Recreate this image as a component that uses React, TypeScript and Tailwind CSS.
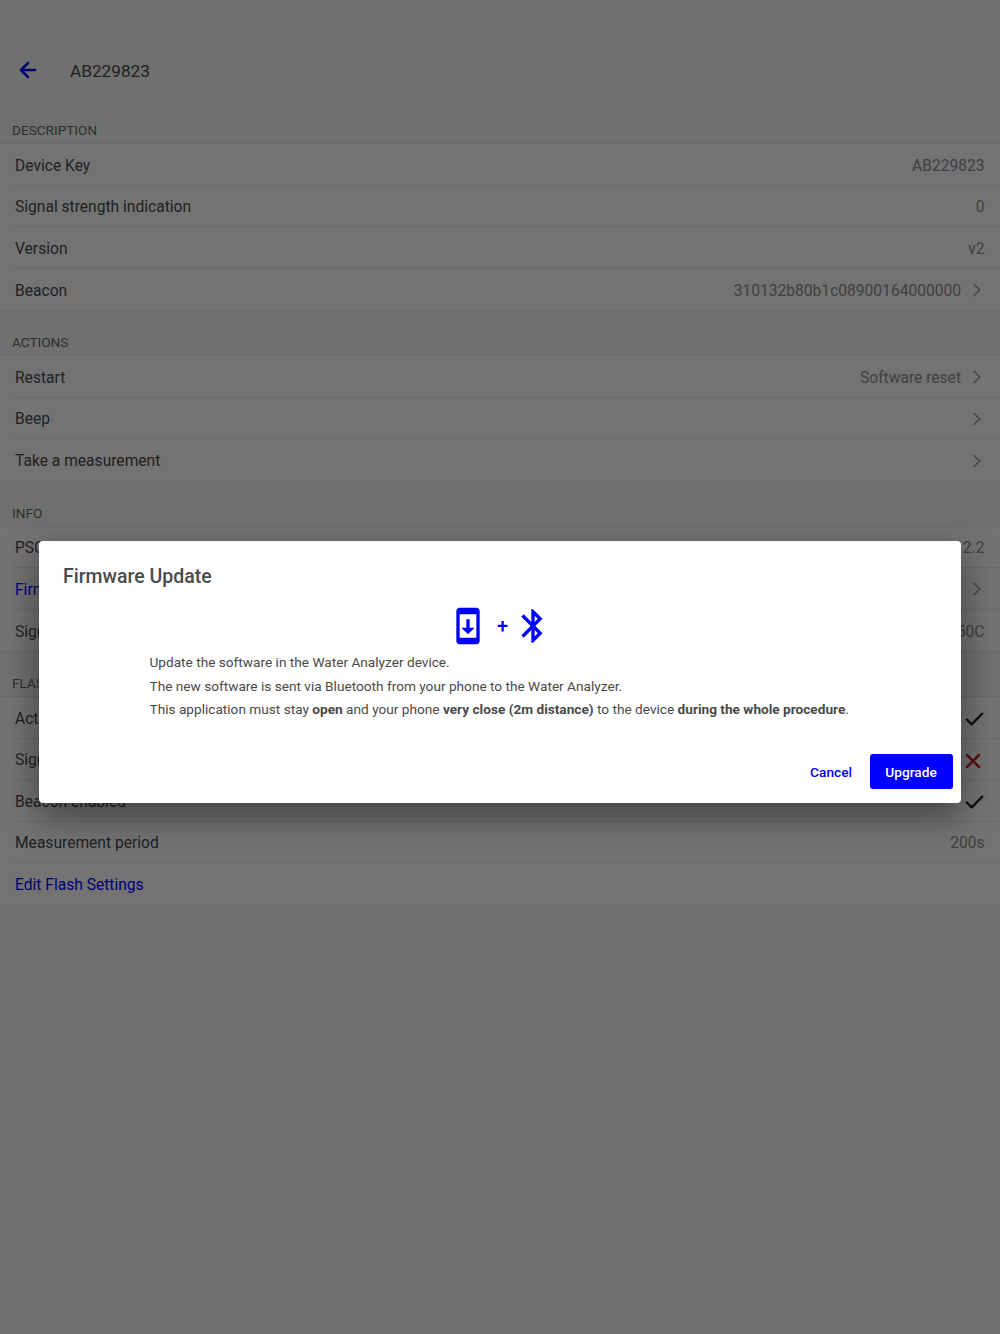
import { ArrowLeft, Check, ChevronRight, X } from 'lucide-react'
import { MdBluetooth, MdSystemUpdate } from 'react-icons/md'
import type { ReactNode } from 'react'

type Row = { label: string; value?: string; link?: boolean; chevron?: boolean; right?: ReactNode }

const sections: Array<{ title: string; rows: Row[] }> = [
  {
    title: 'DESCRIPTION',
    rows: [
      { label: 'Device Key', value: 'AB229823' },
      { label: 'Signal strength indication', value: '0' },
      { label: 'Version', value: 'v2' },
      { label: 'Beacon', value: '310132b80b1c08900164000000', chevron: true },
    ],
  },
  {
    title: 'ACTIONS',
    rows: [
      { label: 'Restart', value: 'Software reset', chevron: true },
      { label: 'Beep', chevron: true },
      { label: 'Take a measurement', chevron: true },
    ],
  },
  {
    title: 'INFO',
    rows: [
      { label: 'PSOC Version', value: '2.2' },
      { label: 'Firmware Version', chevron: true, link: true },
      { label: 'Signal Temperature', value: '50C' },
    ],
  },
  {
    title: 'FLASH SETTINGS',
    rows: [
      { label: 'Active', right: <Check size={23} strokeWidth={2.5} className="text-[#222] -mr-[1px]" /> },
      { label: 'Signal enabled', right: <X size={24} strokeWidth={2.5} className="text-[#c62828]" /> },
      { label: 'Beacon enabled', right: <Check size={23} strokeWidth={2.5} className="text-[#222] -mr-[1px]" /> },
      { label: 'Measurement period', value: '200s' },
      { label: 'Edit Flash Settings', link: true },
    ],
  },
]

function SettingsRow({ row, last }: { row: Row; last: boolean }) {
  return (
    <div className="h-[41.5px] pl-[15px] bg-white">
      <div className={`h-full flex items-center justify-between pr-[15.5px] pt-[4px] ${last ? '' : 'border-b border-[#ececec]'}`}>
        <span className={`text-[15.6px] ${row.link ? 'text-[#0000ff]' : 'text-[#4a4a4a]'}`}>{row.label}</span>
        <div className="flex items-center gap-[5px]">
          {row.value && <span className="text-[15.6px] text-[#8e8e8e]">{row.value}</span>}
          {row.chevron && <ChevronRight size={22} strokeWidth={1.75} className="text-[#9a9a9a] -mr-[3.5px] -mt-[2px]" />}
          {row.right}
        </div>
      </div>
    </div>
  )
}

export default function App() {
  return (
    <div className="relative w-[1000px] h-[1334px] overflow-hidden bg-[#f7fbf7] font-['Roboto',sans-serif]">
      {/* Header */}
      <div className="h-[98px] pt-[46px] flex items-start">
        <div className="w-[70px] h-[49px] pl-[16px] pt-[12px] flex items-start">
          <ArrowLeft size={24} strokeWidth={2.5} className="text-[#0000ff]" />
        </div>
        <span className="text-[17.2px] leading-[50px] text-[#4a4a4a]">AB229823</span>
      </div>

      {/* Settings list */}
      {sections.map((section) => (
        <div key={section.title}>
          <div className="h-[46px] flex items-end pl-[12px] pb-[6px] text-[13.6px] leading-[16px] text-[#666]">
            {section.title}
          </div>
          <div className="relative border-y border-[#ececec] -my-px">
            {section.rows.map((row, i) => (
              <SettingsRow key={row.label} row={row} last={i === section.rows.length - 1} />
            ))}
          </div>
        </div>
      ))}

      {/* Dimmed overlay + dialog */}
      <div className="absolute inset-0 bg-black/55 flex justify-center items-start pt-[541px]">
        <div className="w-[922px] h-[262px] bg-white rounded-[4px] shadow-[0_12px_36px_rgba(0,0,0,0.45)] flex flex-col">
          <h2 className="pl-[24px] pt-[23px] text-[19.5px] leading-[26px] font-medium text-[#4a4a4a]">Firmware Update</h2>
          <div className="mt-[16px] h-[40px] flex items-center justify-center text-[#0000ff]">
            <MdSystemUpdate size={40} />
            <span className="ml-[5px] text-[20px] font-medium w-[20px] text-center">+</span>
            <MdBluetooth size={40} />
          </div>
          <div className="mt-[5px] pl-[110.5px] text-[13.65px] leading-[23.5px] text-[#4a4a4a]">
            <p>Update the software in the Water Analyzer device.</p>
            <p>The new software is sent via Bluetooth from your phone to the Water Analyzer.</p>
            <p>
              This application must stay <b className="font-bold">open</b> and your phone{' '}
              <b className="font-bold">very close (2m distance)</b> to the device{' '}
              <b className="font-bold">during the whole procedure</b>.
            </p>
          </div>
          <div className="mt-auto mb-[14px] mr-[8px] flex justify-end items-center gap-[18px]">
            <button className="text-[13.7px] font-medium text-[#0000ff] pt-[1px]">Cancel</button>
            <button className="w-[83px] h-[35px] rounded-[3px] bg-[#0000ff] text-white text-[13.7px] font-medium pt-[1px] pr-[1px]">
              Upgrade
            </button>
          </div>
        </div>
      </div>
    </div>
  )
}
